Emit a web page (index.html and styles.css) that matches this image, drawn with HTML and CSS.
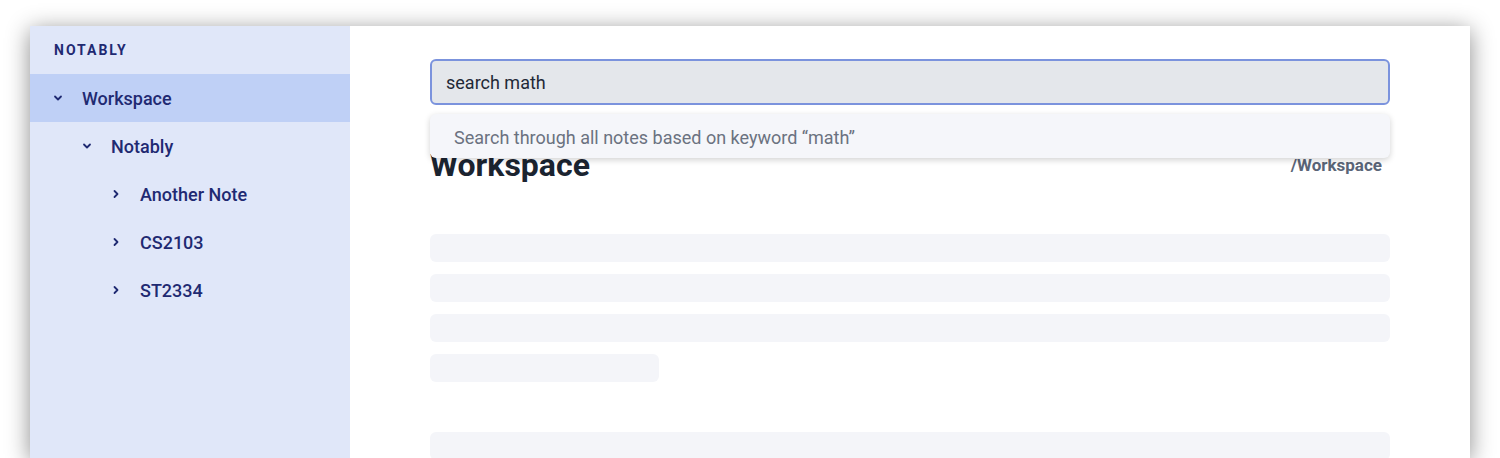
FILE: index.html
```html
<!DOCTYPE html>
<html lang="en">
<head>
    <meta charset="UTF-8">
    <meta name="viewport" content="width=device-width, initial-scale=1.0">
    <title>Notably</title>
    <link rel="stylesheet" href="styles.css">
</head>
<body>

    <div class="janela">
        <aside class="lateral">
            <div class="marca">NOTABLY</div>
            <div class="item ativo nivel0">
                <svg class="seta" viewBox="0 0 10 10"><polyline points="2,3.5 5,6.5 8,3.5"/></svg>
                <span>Workspace</span>
            </div>
            <div class="item nivel1">
                <svg class="seta" viewBox="0 0 10 10"><polyline points="2,3.5 5,6.5 8,3.5"/></svg>
                <span>Notably</span>
            </div>
            <div class="item nivel2">
                <svg class="seta" viewBox="0 0 10 10"><polyline points="3.5,2 6.5,5 3.5,8"/></svg>
                <span>Another Note</span>
            </div>
            <div class="item nivel2">
                <svg class="seta" viewBox="0 0 10 10"><polyline points="3.5,2 6.5,5 3.5,8"/></svg>
                <span>CS2103</span>
            </div>
            <div class="item nivel2">
                <svg class="seta" viewBox="0 0 10 10"><polyline points="3.5,2 6.5,5 3.5,8"/></svg>
                <span>ST2334</span>
            </div>
        </aside>

        <main class="conteudo">
            <div class="busca">
                <input class="campo" type="text" value="search math">
                <div class="sugestao">Search through all notes based on keyword “math”</div>
            </div>

            <div class="cabecalho">
                <h1>Workspace</h1>
                <span class="caminho">/Workspace</span>
            </div>

            <div class="linhas">
                <div class="linha"></div>
                <div class="linha"></div>
                <div class="linha"></div>
                <div class="linha curta"></div>
            </div>
            <div class="linhas">
                <div class="linha"></div>
                <div class="linha"></div>
            </div>
        </main>
    </div>

</body>
</html>
```

FILE: styles.css
```css
body {
    margin: 0;
    background: #ffffff;
    font-family: 'Roboto', 'Liberation Sans', sans-serif;
    height: 458px;
    overflow: hidden;
}
.janela {
    margin: 26px 30px 0;
    height: 432px;
    display: flex;
    background: #ffffff;
    box-shadow: 0 4px 22px rgba(0, 0, 0, 0.45);
}
.lateral {
    width: 320px;
    flex-shrink: 0;
    background: #e0e7f9;
    color: #1f2a72;
}
.marca {
    height: 48px;
    display: flex;
    align-items: center;
    padding-left: 24px;
    font-size: 14px;
    font-weight: 700;
    letter-spacing: 2px;
}
.item {
    height: 48px;
    display: flex;
    align-items: center;
    font-size: 18px;
    font-weight: 500;
}
.item.ativo {
    background: #bfd0f6;
}
.nivel0 { padding-left: 23px; }
.nivel1 { padding-left: 52px; }
.nivel2 { padding-left: 81px; }
.seta {
    width: 10px;
    height: 10px;
    margin-right: 19px;
    fill: none;
    stroke: #1f2a72;
    stroke-width: 1.8;
    stroke-linecap: round;
    stroke-linejoin: round;
}
.conteudo {
    flex: 1;
    padding: 33px 80px 0;
    overflow: hidden;
}
.busca {
    position: relative;
}
.campo {
    display: block;
    box-sizing: border-box;
    width: 100%;
    height: 46px;
    margin: 0;
    padding: 0 14px;
    border: 2px solid #7b93dd;
    border-radius: 6px;
    background: #e4e7eb;
    font-family: inherit;
    font-size: 18px;
    color: #1f2937;
    outline: none;
}
.sugestao {
    position: absolute;
    top: 55px;
    left: 0;
    right: 0;
    height: 44px;
    box-sizing: border-box;
    padding-left: 24px;
    padding-top: 3px;
    display: flex;
    align-items: center;
    background: #f5f6fa;
    border-radius: 6px;
    box-shadow: 0 2px 6px rgba(0, 0, 0, 0.18);
    font-size: 18px;
    color: #6b7280;
    z-index: 2;
}
.cabecalho {
    margin-top: 41px;
    display: flex;
    justify-content: space-between;
    align-items: flex-start;
}
h1 {
    margin: 0;
    font-size: 32px;
    line-height: 38px;
    font-weight: 700;
    color: #1b2430;
}
.caminho {
    margin-top: 7px;
    margin-right: 8px;
    font-size: 17px;
    line-height: 24px;
    font-weight: 700;
    color: #5a6577;
}
.linhas {
    margin-top: 50px;
    display: flex;
    flex-direction: column;
    gap: 12px;
}
.linhas + .linhas {
    margin-top: 50px;
}
.linha {
    height: 28px;
    border-radius: 6px;
    background: #f4f5f9;
}
.linha.curta {
    width: 229px;
}
```
